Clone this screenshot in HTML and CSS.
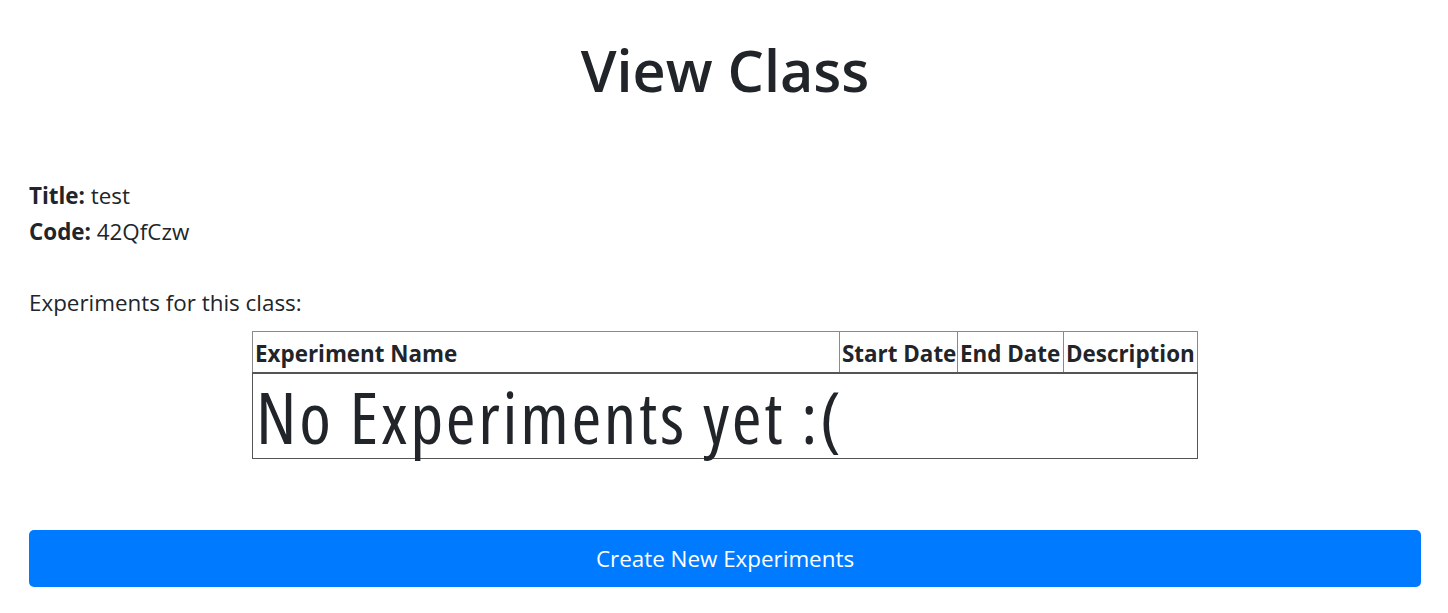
FILE: index.html
```html
<!DOCTYPE html>
<html lang="en">
<head>
<meta charset="utf-8">
<title>View Class</title>
<link rel="stylesheet" href="styles.css">
</head>
<body>
<main class="page">
  <h1 class="page-title">View Class</h1>
  <div class="info">
    <div class="info-line"><strong>Title:</strong> test</div>
    <div class="info-line"><strong>Code:</strong> 42QfCzw</div>
  </div>
  <p class="lead-text">Experiments for this class:</p>
  <table class="exp-table">
    <colgroup>
      <col class="col-name">
      <col class="col-start">
      <col class="col-end">
      <col class="col-desc">
    </colgroup>
    <thead>
      <tr>
        <th>Experiment Name</th>
        <th>Start Date</th>
        <th>End Date</th>
        <th>Description</th>
      </tr>
    </thead>
    <tbody>
      <tr>
        <td colspan="4" class="empty">No Experiments yet :(</td>
      </tr>
    </tbody>
  </table>
  <button class="btn-primary" type="button">Create New Experiments</button>
</main>
</body>
</html>
```

FILE: styles.css
```css
* { box-sizing: border-box; }
html, body { margin: 0; padding: 0; background: #fff; }
body {
  font-family: "Open Sans", "Noto Sans", sans-serif;
  font-size: 22.4px;
  line-height: 30px;
  color: #212529;
}
.page {
  padding: 34px 27px 0 29px;
}
.page-title {
  margin: 0;
  text-align: center;
  font-size: 57.5px;
  line-height: 72px;
  font-weight: 600;
}
.info {
  margin-top: 72px;
}
.info-line {
  line-height: 36px;
}
.info-line strong { font-weight: 700; }
.lead-text {
  margin: 38px 0 0;
  line-height: 30px;
}
.exp-table {
  margin: 13px auto 0;
  width: 945px;
  table-layout: fixed;
  border-collapse: collapse;
  border: 1px solid #6f6f6f;
}
.col-name { width: 587px; }
.col-start { width: 118px; }
.col-end { width: 106px; }
.col-desc { width: 134px; }
.exp-table th {
  text-align: left;
  font-weight: 700;
  font-size: 22.4px;
  line-height: 30px;
  height: 41px;
  padding: 4px 0 0 2px;
  border: 1px solid #8a8a8a;
  border-bottom: 2px solid #555;
  white-space: nowrap;
  overflow: hidden;
}
.exp-table td {
  border: 1px solid #555;
}
.empty {
  font-size: 72px;
  font-stretch: 75%;
  letter-spacing: 2.7px;
  line-height: 84px;
  height: 86px;
  padding: 0 3px;
  font-weight: 400;
}
.btn-primary {
  display: block;
  width: 100%;
  margin-top: 71px;
  height: 57px;
  background: #007bff;
  color: #fff;
  border: none;
  border-radius: 5px;
  font-family: inherit;
  font-size: 22.4px;
  cursor: pointer;
}
```
